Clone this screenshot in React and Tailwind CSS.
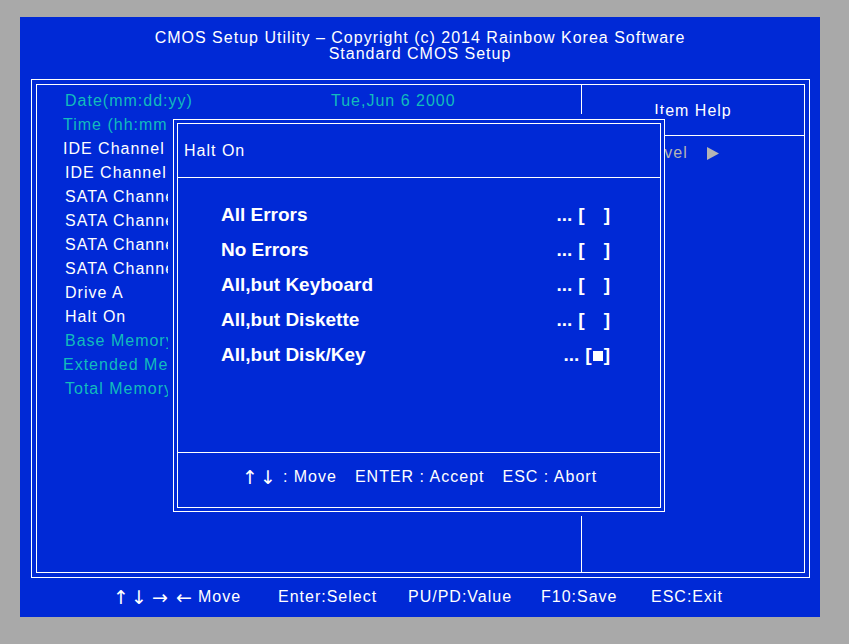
import React from 'react';

const BLUE = 'bg-[#0029d6]';

const rows = [
    { label: 'Date(mm:dd:yy)', value: 'Tue,Jun 6 2000', teal: true, x: 'pl-[28px]' },
    { label: 'Time (hh:mm:ss)', value: '12 : 00 : 00', teal: true, x: 'pl-[26px]' },
    { label: 'IDE Channel 0 Master', x: 'pl-[26px]' },
    { label: 'IDE Channel 0 Slave', x: 'pl-[28px]' },
    { label: 'SATA Channel 1', x: 'pl-[28px]' },
    { label: 'SATA Channel 2', x: 'pl-[28px]' },
    { label: 'SATA Channel 3', x: 'pl-[28px]' },
    { label: 'SATA Channel 4', x: 'pl-[28px]' },
    { label: 'Drive A', x: 'pl-[28px]' },
    { label: 'Halt On', x: 'pl-[28px]' },
    { label: 'Base Memory', teal: true, x: 'pl-[28px]' },
    { label: 'Extended Memory', teal: true, x: 'pl-[26px]' },
    { label: 'Total Memory', teal: true, x: 'pl-[28px]' },
];

const options = ['All Errors', 'No Errors', 'All,but Keyboard', 'All,but Diskette', 'All,but Disk/Key'];

const keys = [
    { text: 'Enter:Select', w: 'w-[130px]' },
    { text: 'PU/PD:Value', w: 'w-[133px]' },
    { text: 'F10:Save', w: 'w-[110px]' },
    { text: 'ESC:Exit', w: 'w-[100px]' },
];

// arrow glyph in a fixed box, DejaVu has cleaner arrows than Liberation
const Arrow = ({ c, w }) => (
    <span className={`${w} inline-flex justify-center font-['DejaVu_Sans',sans-serif] text-[19px] leading-[16px] tracking-normal`}>
        {c}
    </span>
);

export default function App() {
    return (
        <div className="min-h-screen bg-[#a9a9a9] pt-[17px] pl-[20px] font-['Liberation_Sans',Arial,sans-serif]">
            <div className={`relative w-[800px] h-[600px] ${BLUE} flex flex-col`}>
                {/* Title */}
                <div className="pt-[13px] text-center text-white text-[16px] leading-[16px] tracking-[1px]">
                    <div>CMOS Setup Utility – Copyright (c) 2014 Rainbow Korea Software</div>
                    <div>Standard CMOS Setup</div>
                </div>

                {/* Main double frame */}
                <div className="ml-[11px] mt-[17px] w-[779px] h-[499px] border border-white p-[4px]">
                    <div className="h-full border border-white flex">
                        <div className="w-[545px] pt-[4px] border-r border-white text-[16px] tracking-[1px]">
                            {rows.map((r) => (
                                <div key={r.label} className={`h-6 flex items-center ${r.x} ${r.teal ? 'text-[#12bcbc]' : 'text-white'}`}>
                                    <span className="w-[266px] whitespace-nowrap">{r.label}</span>
                                    {r.value && <span>{r.value}</span>}
                                </div>
                            ))}
                        </div>
                        <div className="flex-1 flex flex-col">
                            <div className="h-[51px] pt-[2px] border-b border-white flex items-center justify-center text-white text-[16px] tracking-[1px]">
                                Item Help
                            </div>
                            <div className="h-[33px] pt-[1px] pl-[13px] flex items-center text-[#b4b4b4] text-[16px] tracking-[1px]">
                                <span className="w-[112px]">Menu Level</span>
                                <svg width="12" height="13" viewBox="0 0 12 13">
                                    <polygon points="0,0 12,6.5 0,13" fill="#b4b4b4" />
                                </svg>
                            </div>
                        </div>
                    </div>
                </div>

                {/* Key bar */}
                <div className="h-[38px] pl-[92px] flex items-center text-white text-[16px] tracking-[1px] whitespace-nowrap">
                    <span className="w-[166px] flex items-center">
                        <Arrow c="↑" w="w-[18px]" />
                        <Arrow c="↓" w="w-[18px]" />
                        <Arrow c="→" w="w-[24px]" />
                        <Arrow c="←" w="w-[24px]" />
                        <span className="ml-[2px]">Move</span>
                    </span>
                    {keys.map((k) => (
                        <span key={k.text} className={k.w}>{k.text}</span>
                    ))}
                </div>

                {/* Halt On popup */}
                <div className={`absolute left-[148px] top-[97px] w-[497px] h-[402px] ${BLUE} pl-[5px] pt-[5px] pb-[4px]`}>
                    <div className="h-full border border-white p-[3px]">
                        <div className="h-full border border-white flex flex-col text-white">
                            <div className="h-[54px] shrink-0 border-b border-white flex items-center pl-[6px] text-[16px] tracking-[1px]">
                                Halt On
                            </div>
                            <div className="flex-1 pt-[20px] pl-[43px] pr-[50px] text-[19px] font-bold">
                                {options.map((o, i) => (
                                    <div key={o} className="h-[35px] flex items-center justify-between">
                                        <span>{o}</span>
                                        {i < 4 ? (
                                            <span className="flex items-center">
                                                <span>...</span>
                                                <span className="ml-[6px]">[</span>
                                                <span className="w-[19px]" />
                                                <span>]</span>
                                            </span>
                                        ) : (
                                            <span className="flex items-center">
                                                <span>...</span>
                                                <span className="ml-[6px]">[</span>
                                                <span className="ml-[1px] w-[10px] h-[10px] bg-white" />
                                                <span className="ml-[1px]">]</span>
                                            </span>
                                        )}
                                    </div>
                                ))}
                            </div>
                            <div className="h-[55px] shrink-0 border-t border-white pb-[7px] flex items-center justify-center gap-[18px] text-[16px] tracking-[1px]">
                                <span className="flex items-center">
                                    <Arrow c="↑" w="w-[18px]" />
                                    <Arrow c="↓" w="w-[18px]" />
                                    <span className="ml-[6px]">: Move</span>
                                </span>
                                <span>ENTER : Accept</span>
                                <span>ESC : Abort</span>
                            </div>
                        </div>
                    </div>
                </div>
            </div>
        </div>
    );
}
